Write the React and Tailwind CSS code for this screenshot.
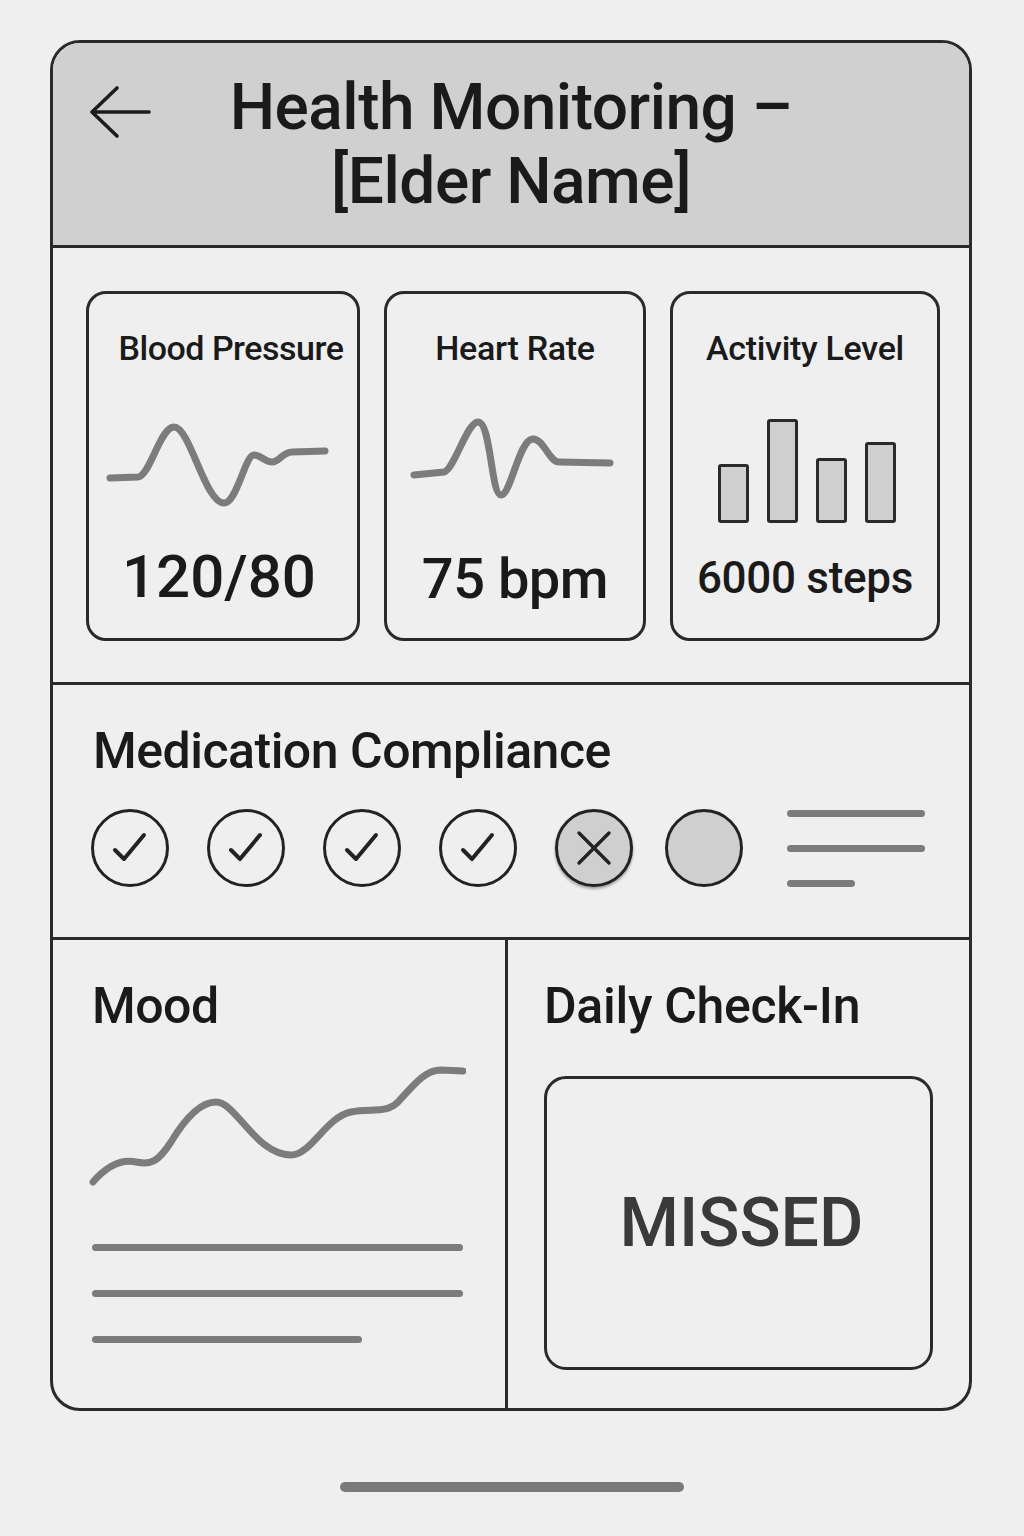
const font = { fontFamily: 'Roboto, "Liberation Sans", Arial, sans-serif' };

const Bar = ({ h }) => (
  <div className={`w-[31px] ${h} bg-[#cfcfcf] border-[3px] border-[#2a2a2a] rounded-[3px]`} />
);

const Check = () => (
  <div className="w-[78px] h-[78px] rounded-full border-[3px] border-[#222] flex items-center justify-center">
    <svg width="38" height="38" viewBox="0 0 38 38" fill="none">
      <path d="M4 21 L13 30 L33 6" stroke="#222" strokeWidth="4" strokeLinecap="round" strokeLinejoin="round" />
    </svg>
  </div>
);

const App = () => {
  return (
    <div className="w-[1024px] h-[1536px] bg-[#efefef] pt-[40px] px-[50px]" style={font}>

      {/* Frame */}
      <div className="w-[922px] h-[1371px] border-[3px] border-[#2a2a2a] rounded-[30px] overflow-hidden flex flex-col bg-[#efefef]">

        {/* Header */}
        <div className="h-[205px] shrink-0 bg-[#d0d0d0] border-b-[3px] border-[#2a2a2a] flex items-center">
          <div className="w-[100px] pl-[36px] self-start pt-[42px]">
            <svg width="64" height="56" viewBox="0 0 64 56" fill="none">
              <path d="M28 3 L3 27 L28 51 M3 27 H60" stroke="#1c1c1c" strokeWidth="3.6" strokeLinecap="round" strokeLinejoin="round" />
            </svg>
          </div>
          <h1 className="flex-1 text-center text-[64px] leading-[74px] font-medium text-[#1a1a1a] tracking-[-0.5px] pt-[2px]">
            Health Monitoring –<br />[Elder Name]
          </h1>
          <div className="w-[100px]" />
        </div>

        {/* Stats Cards */}
        <div className="h-[437px] shrink-0 border-b-[3px] border-[#2a2a2a] pt-[43px] pl-[33px] pr-[29px] flex gap-[24px]">

          <div className="w-[276px] h-[350px] border-[3px] border-[#2a2a2a] rounded-[20px] flex flex-col items-center">
            <p className="text-[34px] leading-[40px] font-medium text-[#1a1a1a] mt-[34px] tracking-[-0.5px] ml-[16px]">Blood Pressure</p>
            <svg width="225" height="90" viewBox="0 0 225 90" fill="none" className="mt-[52px] -ml-[10px]">
              <path d="M5 58 L33 57 C45 56 55 7 69 7 C85 7 100 83 119 83 C132 83 140 35 149 35 C156 35 160 42 167 42 C174 42 178 32 187 32 L220 31" stroke="#7c7c7c" strokeWidth="7" strokeLinecap="round" strokeLinejoin="round" />
            </svg>
            <p className="text-[60px] leading-[70px] font-medium text-[#1a1a1a] mt-[32px] -ml-[8px]">120/80</p>
          </div>

          <div className="w-[264px] h-[350px] border-[3px] border-[#2a2a2a] rounded-[20px] flex flex-col items-center">
            <p className="text-[34px] leading-[40px] font-medium text-[#1a1a1a] mt-[34px] tracking-[-0.3px]">Heart Rate</p>
            <svg width="205" height="90" viewBox="0 0 205 90" fill="none" className="mt-[46px] -ml-[6px]">
              <path d="M5 61 L35 58 C45 56 58 8 69 8 C82 8 82 81 92 81 C102 81 110 25 124 25 C135 25 140 48 150 48 L201 49" stroke="#7c7c7c" strokeWidth="7" strokeLinecap="round" strokeLinejoin="round" />
            </svg>
            <p className="text-[56px] leading-[70px] font-medium text-[#1a1a1a] mt-[40px] tracking-[-0.5px]">75 bpm</p>
          </div>

          <div className="w-[272px] h-[350px] border-[3px] border-[#2a2a2a] rounded-[20px] flex flex-col items-center">
            <p className="text-[34px] leading-[40px] font-medium text-[#1a1a1a] mt-[34px] tracking-[-0.3px]">Activity Level</p>
            <div className="flex items-end gap-[18px] h-[106px] mt-[49px] ml-[4px]">
              <Bar h="h-[59px]" />
              <Bar h="h-[104px]" />
              <Bar h="h-[65px]" />
              <Bar h="h-[81px]" />
            </div>
            <p className="text-[44px] leading-[56px] font-medium text-[#1a1a1a] mt-[27px] tracking-[-0.3px]">6000 steps</p>
          </div>

        </div>

        {/* Medication Compliance */}
        <div className="h-[255px] shrink-0 border-b-[3px] border-[#2a2a2a] pl-[40px] pr-[44px] pt-[38px]">
          <h2 className="text-[50px] font-medium text-[#1a1a1a] tracking-[-0.5px] leading-[56px]">Medication Compliance</h2>
          <div className="flex items-center mt-[30px] -ml-[2px]">
            <div className="flex items-center gap-[38px]">
              <Check />
              <Check />
              <Check />
              <Check />
            </div>
            <div className="w-[78px] h-[78px] ml-[38px] rounded-full border-[3px] border-[#222] bg-[#cfcfcf] flex items-center justify-center shadow-[0_2px_3px_rgba(0,0,0,0.35)]">
              <svg width="38" height="38" viewBox="0 0 38 38" fill="none">
                <path d="M4 4 L34 34 M34 4 L4 34" stroke="#222" strokeWidth="3.4" strokeLinecap="round" />
              </svg>
            </div>
            <div className="w-[78px] h-[78px] ml-[32px] rounded-full border-[3px] border-[#222] bg-[#cfcfcf]" />
            <div className="ml-[44px] flex flex-col gap-[28px]">
              <div className="w-[138px] h-[7px] rounded-full bg-[#7c7c7c]" />
              <div className="w-[138px] h-[7px] rounded-full bg-[#7c7c7c]" />
              <div className="w-[68px] h-[7px] rounded-full bg-[#7c7c7c]" />
            </div>
          </div>
        </div>

        {/* Mood / Daily Check-In */}
        <div className="flex-1 grid grid-cols-[455px_1fr]">

          <div className="border-r-[3px] border-[#2a2a2a] pl-[39px] pr-[40px] pt-[38px]">
            <h2 className="text-[50px] font-medium text-[#1a1a1a] leading-[56px] tracking-[-0.5px]">Mood</h2>
            <svg width="380" height="130" viewBox="0 0 380 130" fill="none" className="mt-[28px] -ml-[6px]">
              <path d="M7 120 C20 105 35 97 50 100 C65 103 72 100 85 80 C100 55 115 40 130 40 C150 40 170 93 205 93 C225 93 240 55 265 50 C285 46 300 52 312 40 C330 20 340 8 355 8 L377 9" stroke="#7c7c7c" strokeWidth="7" strokeLinecap="round" strokeLinejoin="round" />
            </svg>
            <div className="flex flex-col gap-[39px] mt-[52px]">
              <div className="w-[371px] h-[7px] rounded-full bg-[#7c7c7c]" />
              <div className="w-[371px] h-[7px] rounded-full bg-[#7c7c7c]" />
              <div className="w-[270px] h-[7px] rounded-full bg-[#7c7c7c]" />
            </div>
          </div>

          <div className="pl-[36px] pr-[36px] pt-[38px]">
            <h2 className="text-[50px] font-medium text-[#1a1a1a] leading-[56px] tracking-[-0.3px]">Daily Check-In</h2>
            <div className="mt-[42px] h-[294px] border-[3px] border-[#2a2a2a] rounded-[22px] flex items-center justify-center">
              <span className="text-[68px] font-medium text-[#3a3a3a] pl-[6px]">MISSED</span>
            </div>
          </div>

        </div>
      </div>

      {/* Home indicator */}
      <div className="mt-[71px] mx-auto w-[344px] h-[10px] rounded-full bg-[#7a7a7a]" />
    </div>
  );
};

export default App;
